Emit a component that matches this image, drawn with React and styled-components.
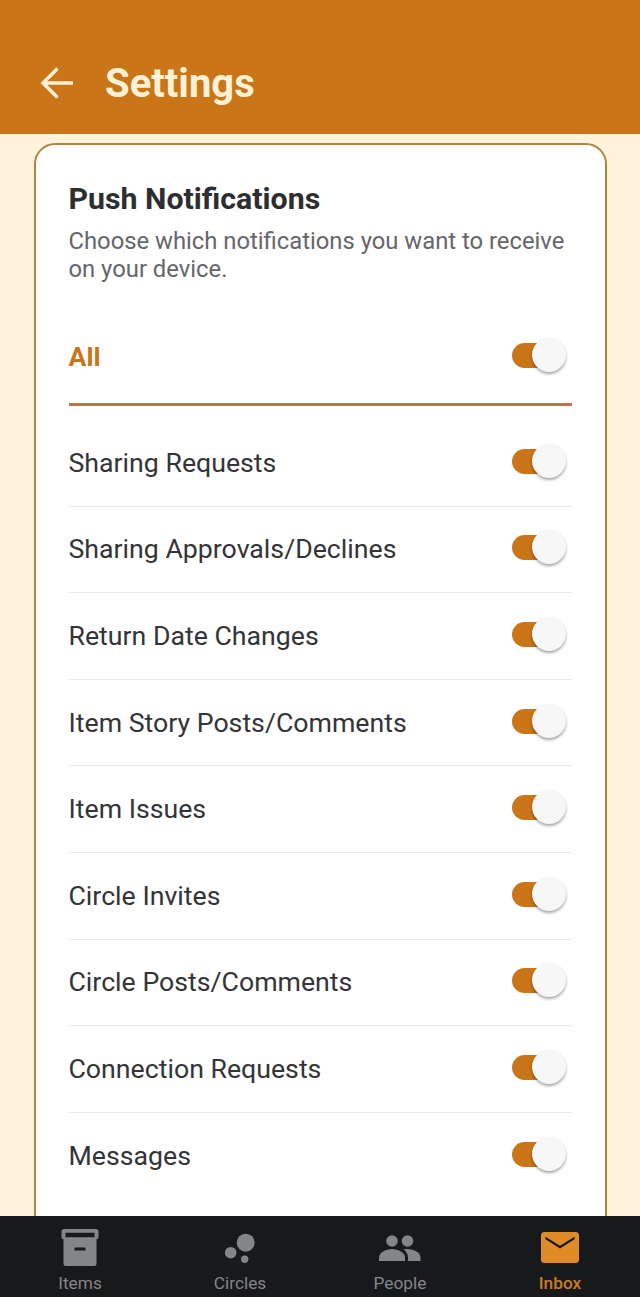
import React from 'react'
import styled, { createGlobalStyle } from 'styled-components'

const GlobalStyle = createGlobalStyle`
  html, body {
    margin: 0;
    padding: 0;
    background: #fff3dc;
    font-family: Roboto, "Liberation Sans", sans-serif;
  }
  * {
    box-sizing: border-box;
  }
`

const rows = [
  'Sharing Requests',
  'Sharing Approvals/Declines',
  'Return Date Changes',
  'Item Story Posts/Comments',
  'Item Issues',
  'Circle Invites',
  'Circle Posts/Comments',
  'Connection Requests',
  'Messages',
]

const ArchiveIcon = () => (
  <svg width='38' height='37' viewBox='0 0 38 37' fill='currentColor'>
    <path fillRule='evenodd' d='M3 0h32a2.5 2.5 0 0 1 2.500 2.500V8.500a1.500 1.500 0 0 1-1.500 1.500h-.5v24.500A2.500 2.500 0 0 1 33 37H5a2.500 2.500 0 0 1-2.500-2.500V10H2A1.500 1.500 0 0 1 .5 8.500V2.500A2.500 2.500 0 0 1 3 0zM4.500 3.800v4.500h29V3.800zM13.500 18.500v3h11v-3z' />
  </svg>
)

const CirclesIcon = () => (
  <svg width='30' height='30' viewBox='0 0 30 30' fill='currentColor'>
    <circle cx='20.700' cy='9.700' r='9' />
    <circle cx='5.700' cy='19.700' r='5.800' />
    <circle cx='19.700' cy='26.300' r='3.700' />
  </svg>
)

const PeopleIcon = () => (
  <svg width='42' height='26' viewBox='0 0 42 26' fill='currentColor'>
    <circle cx='13' cy='6' r='5.800' />
    <circle cx='28.500' cy='6' r='5.800' />
    <path d='M0 26v-3.500c0-5 7-8.500 13-8.500s13 3.500 13 8.500V26z' />
    <path d='M24.500 14.300c1-.2 2.800-.3 4-.3 6 0 13 3.500 13 8.500V26H29v-3.500c0-3.200-1.800-6.200-4.500-8.200z' />
  </svg>
)

const MailIcon = () => (
  <svg width='38' height='31' viewBox='0 0 38 31' fill='currentColor'>
    <path fillRule='evenodd' d='M3.500 0h31A3.500 3.500 0 0 1 38 3.500v24a3.500 3.500 0 0 1-3.500 3.500h-31A3.500 3.500 0 0 1 0 27.500v-24A3.500 3.500 0 0 1 3.500 0zM4.500 4.700v2.600L19 16.500l14.500-9.200V4.700L19 13.800z' />
  </svg>
)

const tabs = [
  { label: 'Items', icon: <ArchiveIcon /> },
  { label: 'Circles', icon: <CirclesIcon /> },
  { label: 'People', icon: <PeopleIcon /> },
  { label: 'Inbox', icon: <MailIcon />, active: true },
]

export default function App() {
  return (
    <Page>
      <GlobalStyle />
      <Header>
        <BackArrow width='36' height='36' viewBox='0 0 36 36' fill='none' stroke='#fff1d6' strokeWidth='3.5'>
          <path d='M34 18H4M18.500 3.500L4 18l14.500 14.500' />
        </BackArrow>
        <Title>Settings</Title>
      </Header>
      <Main>
        <Card>
          <CardTitle>Push Notifications</CardTitle>
          <Description>Choose which notifications you want to receive on your device.</Description>
          <AllRow>
            <AllLabel>All</AllLabel>
            <Toggle />
          </AllRow>
          <List>
            {rows.map((label) => (
              <Row key={label}>
                <RowLabel>{label}</RowLabel>
                <Toggle />
              </Row>
            ))}
          </List>
        </Card>
      </Main>
      <TabBar>
        {tabs.map((tab) => (
          <Tab key={tab.label} $active={tab.active}>
            <TabIcon>{tab.icon}</TabIcon>
            <span>{tab.label}</span>
          </Tab>
        ))}
      </TabBar>
    </Page>
  )
}

const Toggle = () => (
  <Track>
    <Knob />
  </Track>
)

const Page = styled.div`
  width: 640px;
  height: 1297px;
  display: flex;
  flex-direction: column;
  overflow: hidden;
  background: #fff3dc;
`

const Header = styled.header`
  flex: 0 0 134px;
  background: #c97518;
  display: flex;
  align-items: center;
  gap: 30px;
  padding: 33px 0 0 39px;
`

const BackArrow = styled.svg`
  flex: none;
  margin-top: -2px;
`

const Title = styled.h1`
  margin: 0;
  font-size: 40px;
  font-weight: 700;
  line-height: 44px;
  color: #fff1d6;
`

const Main = styled.main`
  flex: 1;
  min-height: 0;
  overflow: hidden;
  padding: 9px 33.5px 0;
`

const Card = styled.section`
  background: #fff;
  border: 2px solid #b5843f;
  border-radius: 21px;
  padding: 36px 33px 40px;
`

const CardTitle = styled.h2`
  margin: 0;
  font-size: 30.300px;
  font-weight: 700;
  line-height: 36px;
  color: #2d2e30;
`

const Description = styled.p`
  margin: 9.500px 0 0;
  font-size: 23.800px;
  line-height: 28px;
  color: #65666a;
`

const AllRow = styled.div`
  display: flex;
  align-items: center;
  justify-content: space-between;
  height: 95px;
  margin-top: 28.500px;
  padding-right: 7px;
  border-bottom: 3px solid #c2782a;
`

const AllLabel = styled.span`
  font-size: 26.700px;
  font-weight: 700;
  color: #c97518;
`

const List = styled.div`
  padding-top: 14px;
`

const Row = styled.div`
  display: flex;
  align-items: center;
  justify-content: space-between;
  height: 86.600px;
  padding-right: 7px;
  border-bottom: 1px solid #e9e9e9;
  &:last-child {
    border-bottom: none;
  }
`

const RowLabel = styled.span`
  font-size: 26.700px;
  color: #333437;
`

const Track = styled.div`
  position: relative;
  width: 53px;
  height: 25px;
  margin-top: -3px;
  border-radius: 13px;
  background: #c97518;
`

const Knob = styled.div`
  position: absolute;
  right: -1px;
  top: -5px;
  width: 34px;
  height: 34px;
  border-radius: 50%;
  background: #f7f7f7;
  box-shadow: 0 2px 3px rgba(0, 0, 0, 0.35);
`

const TabBar = styled.nav`
  flex: 0 0 81px;
  display: grid;
  grid-template-columns: repeat(4, 1fr);
  background: #18191b;
  position: relative;
  z-index: 1;
`

const Tab = styled.div`
  display: flex;
  flex-direction: column;
  align-items: center;
  padding-top: 13px;
  font-size: 17.300px;
  font-weight: ${(p) => (p.$active ? 500 : 400)};
  line-height: 20px;
  color: ${(p) => (p.$active ? '#c97d26' : '#858688')};
  svg {
    color: ${(p) => (p.$active ? '#e08a28' : '#848586')};
  }
`

const TabIcon = styled.div`
  height: 37px;
  display: flex;
  align-items: center;
  justify-content: center;
  margin-bottom: 7px;
`
